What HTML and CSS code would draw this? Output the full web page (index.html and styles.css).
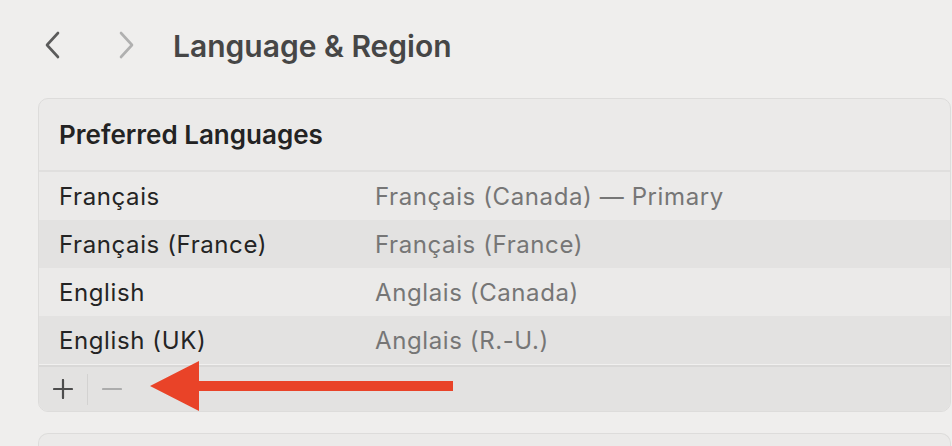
FILE: index.html
```html
<!DOCTYPE html>
<html>
<head>
<meta charset="utf-8">
<link rel="stylesheet" href="styles.css">
</head>
<body>
<header class="toolbar">
  <svg class="nav back" width="20" height="30" viewBox="0 0 20 30"><path d="M15 3 L4 15 L15 27" fill="none" stroke="#5b5b5b" stroke-width="2.6" stroke-linecap="round" stroke-linejoin="round"/></svg>
  <svg class="nav fwd" width="20" height="30" viewBox="0 0 20 30"><path d="M5 3 L16 15 L5 27" fill="none" stroke="#b0b0b0" stroke-width="2.6" stroke-linecap="round" stroke-linejoin="round"/></svg>
  <h1 class="title">Language &amp; Region</h1>
</header>
<main class="content">
  <section class="card">
    <div class="card-head">Preferred Languages</div>
    <div class="rows">
      <div class="row"><span class="name">Français</span><span class="detail">Français (Canada) — Primary</span></div>
      <div class="row alt"><span class="name">Français (France)</span><span class="detail">Français (France)</span></div>
      <div class="row"><span class="name">English</span><span class="detail">Anglais (Canada)</span></div>
      <div class="row alt"><span class="name">English (UK)</span><span class="detail">Anglais (R.-U.)</span></div>
    </div>
    <div class="footer">
      <span class="btn plus"><svg width="20" height="20" viewBox="0 0 20 20"><path d="M10 1 V19 M1 10 H19" stroke="#4d4d4d" stroke-width="2.2" stroke-linecap="round"/></svg></span>
      <span class="sep"></span>
      <span class="btn minus"><svg width="20" height="20" viewBox="0 0 20 20"><path d="M1 10 H19" stroke="#acacac" stroke-width="2.2" stroke-linecap="round"/></svg></span>
    </div>
    <svg class="arrow" width="310" height="52" viewBox="0 0 310 52"><polygon points="0,25 49,0 49,20 303,20 303,30 49,30 49,50" fill="#e94328"/></svg>
  </section>
  <section class="card next"></section>
</main>
</body>
</html>
```
FILE: styles.css
```css
html, body {
  margin: 0;
  padding: 0;
  background: #efeeed;
  font-family: Inter, "Noto Sans", "Liberation Sans", sans-serif;
  overflow: hidden;
  height: 446px;
}
.toolbar {
  display: flex;
  align-items: center;
  height: 92px;
  padding-left: 43px;
}
.nav { display: block; margin-top: -2px; }
.nav.fwd { margin-left: 53px; }
.title {
  margin: 0 0 0 37px;
  font-size: 30px;
  font-weight: 600;
  color: #464646;
}
.content {
  padding-top: 6px;
  padding-left: 38px;
}
.card {
  position: relative;
  width: 911px;
  border: 1px solid #dddcdb;
  border-radius: 10px;
  background: #ebeae9;
  overflow: hidden;
}
.card-head {
  height: 71px;
  display: flex;
  align-items: center;
  padding-left: 20px;
  font-size: 26px;
  font-weight: 600;
  color: #232323;
  border-bottom: 2px solid #e0dfde;
}
.row {
  display: flex;
  align-items: center;
  height: 48px;
  padding-left: 20px;
  font-size: 24px;
  letter-spacing: 0.6px;
}
.row.alt { background: #e3e2e1; }
.name { width: 316px; color: #242424; }
.detail { color: #767676; }
.footer {
  display: flex;
  align-items: center;
  height: 44px;
  border-top: 1px solid #f1f0ef;
  box-shadow: inset 0 2px 0 #d9d8d7;
  background: #e3e2e1;
  padding-top: 2px;
}
.btn {
  width: 48px;
  display: flex;
  justify-content: center;
}
.btn svg { display: block; }
.sep {
  width: 1px;
  height: 31px;
  background: #d3d2d1;
}
.arrow {
  position: absolute;
  left: 111px;
  top: 262px;
}
.card.next {
  margin-top: 21px;
  height: 12px;
  border-bottom: none;
  border-radius: 10px 10px 0 0;
}
```
